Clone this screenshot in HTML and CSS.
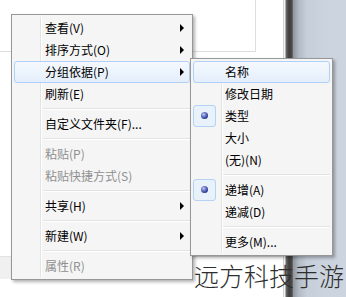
FILE: index.html
```html
<!DOCTYPE html>
<html lang="zh-CN">
<head>
<meta charset="utf-8">
<title>右键菜单</title>
<link rel="stylesheet" href="styles.css">
</head>
<body>
<div class="desk">
  <div class="page">
    <div class="pane"></div>
    <div class="rowline"></div>
  </div>
  <div class="frame"></div>
  <div class="glass"></div>
</div>

<ul class="menu main">
  <li class="item more">查看(V)</li>
  <li class="item more">排序方式(O)</li>
  <li class="item more hl">分组依据(P)</li>
  <li class="item">刷新(E)</li>
  <li class="sep"></li>
  <li class="item">自定义文件夹(F)...</li>
  <li class="sep"></li>
  <li class="item off">粘贴(P)</li>
  <li class="item off">粘贴快捷方式(S)</li>
  <li class="sep"></li>
  <li class="item more">共享(H)</li>
  <li class="sep"></li>
  <li class="item more">新建(W)</li>
  <li class="sep"></li>
  <li class="item off">属性(R)</li>
</ul>

<ul class="menu sub">
  <li class="item hl">名称</li>
  <li class="item">修改日期</li>
  <li class="item radio">类型</li>
  <li class="item">大小</li>
  <li class="item">(无)(N)</li>
  <li class="sep"></li>
  <li class="item radio">递增(A)</li>
  <li class="item">递减(D)</li>
  <li class="sep"></li>
  <li class="item">更多(M)...</li>
</ul>

<div class="mark">远方科技手游</div>
</body>
</html>
```

FILE: styles.css
```css
html, body {
  margin: 0;
  padding: 0;
}

body {
  width: 346px;
  height: 297px;
  overflow: hidden;
  position: relative;
  background: #ffffff;
  font-family: "Noto Sans CJK SC", "Noto Sans", sans-serif;
}

.desk {
  display: flex;
  height: 297px;
}

.page {
  width: 283px;
  border-right: 1px solid #d2d2d2;
  background: #ffffff;
  flex: none;
}

.pane {
  width: 255px;
  height: 51px;
  border-right: 1px solid #dedede;
  border-bottom: 1px solid #dedede;
}

.rowline {
  margin-top: 204px;
  height: 22px;
  border-top: 1px solid #e2e2e2;
  background: linear-gradient(to right, #f0f0f0 0, #f0f0f0 11px, #ffffff 11px);
}

.frame {
  width: 9px;
  flex: none;
  background: linear-gradient(to right, #f4f4f4 0, #f4f4f4 1px, #6a6a6a 2px, #3e3e3e 5px, #4a4a4a 8px, #7c7c7c 9px);
}

.glass {
  flex: 1;
  background: linear-gradient(to right, #8e949c 0, #b3bbc6 6px, #c6ced9 14px, #cbd3de 30px, #ccd4df 100%);
}

.menu {
  position: absolute;
  margin: 0;
  padding: 2px;
  list-style: none;
  box-sizing: border-box;
  background: #f5f5f5;
  border: 1px solid #979797;
  box-shadow: 2px 2px 3px rgba(0, 0, 0, 0.3);
  font-size: 12px;
  color: #000000;
}

.menu::before {
  content: "";
  position: absolute;
  top: 2px;
  bottom: 2px;
  width: 1px;
  background: #e2e3e3;
  box-shadow: 1px 0 #ffffff;
}

.main {
  left: 11px;
  top: 14px;
  width: 182px;
}

.main::before {
  left: 28px;
}

.sub {
  left: 190px;
  top: 58px;
  width: 143px;
}

.sub::before {
  left: 30px;
}

.item {
  position: relative;
  height: 22px;
  box-sizing: border-box;
  border: 1px solid transparent;
  border-radius: 3px;
  padding-left: 30px;
  line-height: 20px;
  white-space: nowrap;
}

.sub .item {
  padding-left: 31px;
}

.item.hl {
  border-color: #b0d0f5;
  background: linear-gradient(#f5f9fe, #e4eefb);
}

.item.off {
  color: #8f8f8f;
}

.item.more::after {
  content: "";
  position: absolute;
  right: 5px;
  top: 6px;
  width: 0;
  height: 0;
  border-left: 4px solid #000000;
  border-top: 4px solid transparent;
  border-bottom: 4px solid transparent;
}

.item.radio::before {
  content: "";
  position: absolute;
  left: -1px;
  top: -1px;
  width: 23px;
  height: 22px;
  box-sizing: border-box;
  border: 1px solid #b4d2f3;
  border-radius: 3px;
  background: #e9f1fb;
}

.item.radio::after {
  content: "";
  position: absolute;
  left: 7px;
  top: 6px;
  width: 7px;
  height: 7px;
  border-radius: 50%;
  background: radial-gradient(circle at 38% 35%, #c4ccf2 0, #6a78c8 35%, #2c3a92 70%, #1e2a74 100%);
}

.sep {
  position: relative;
  height: 8px;
  margin-left: 29px;
}

.sub .sep {
  margin-left: 30px;
}

.sep::after {
  content: "";
  position: absolute;
  left: 0;
  right: 0;
  top: 3px;
  height: 1px;
  background: #e2e3e3;
  box-shadow: 0 1px #ffffff;
}

.mark {
  position: absolute;
  left: 194px;
  top: 263px;
  font-size: 25px;
  line-height: 1;
  font-weight: 300;
  color: #2e2e2e;
  white-space: nowrap;
}
```
